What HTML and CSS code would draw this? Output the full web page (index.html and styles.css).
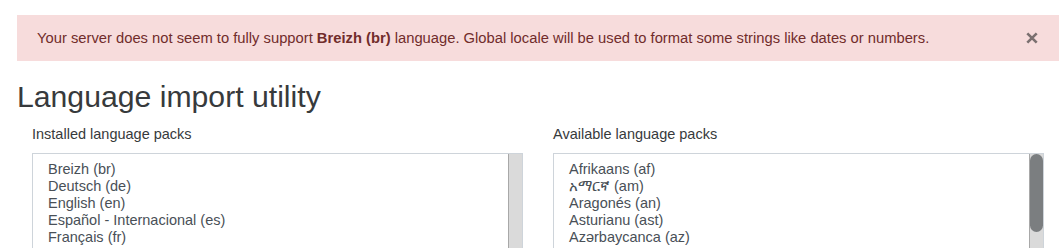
FILE: index.html
```html
<!DOCTYPE html>
<html lang="en">
<head>
    <meta charset="UTF-8">
    <title>Language import utility</title>
    <link rel="stylesheet" href="styles.css">
</head>
<body>
    <div class="page">
        <!-- Aviso del servidor -->
        <div class="alert">
            <span>Your server does not seem to fully support <strong>Breizh (br)</strong> language. Global locale will be used to format some strings like dates or numbers.</span>
            <span class="close">
                <svg width="12" height="12" viewBox="0 0 12 12"><path d="M1.3 1.3 L10.7 10.7 M10.7 1.3 L1.3 10.7" stroke="#7b7070" stroke-width="2.6" fill="none"/></svg>
            </span>
        </div>

        <h2 class="title">Language import utility</h2>

        <div class="columns">
            <div class="col">
                <div class="label">Installed language packs</div>
                <div class="listbox">
                    <div class="options">
                        <div>Breizh (br)</div>
                        <div>Deutsch (de)</div>
                        <div>English (en)</div>
                        <div>Español - Internacional (es)</div>
                        <div>Français (fr)</div>
                    </div>
                    <div class="scrollbar"></div>
                </div>
            </div>
            <div class="col">
                <div class="label">Available language packs</div>
                <div class="listbox">
                    <div class="options">
                        <div>Afrikaans (af)</div>
                        <div>አማርኛ (am)</div>
                        <div>Aragonés (an)</div>
                        <div>Asturianu (ast)</div>
                        <div>Azərbaycanca (az)</div>
                    </div>
                    <div class="scrollbar">
                        <div class="thumb"></div>
                    </div>
                </div>
            </div>
        </div>
    </div>
</body>
</html>
```

FILE: styles.css
```css
body{
    margin: 0;
    font-family: "Liberation Sans", Arial, "Noto Sans", sans-serif;
    background: #fff;
    color: #373a3c;
}

.page{
    padding: 15px 3px 0 17px;
}

.alert{
    display: flex;
    justify-content: space-between;
    align-items: center;
    background: #f7dcdc;
    color: #712c2b;
    padding: 12px 20px;
    font-size: 14.75px;
    line-height: 22px;
}

.close{
    display: flex;
    margin-right: 1px;
}

.title{
    margin: 18px 0 8px;
    font-size: 30.2px;
    font-weight: 400;
    line-height: 36px;
    color: #373a3c;
}

.columns{
    display: grid;
    grid-template-columns: 1fr 1fr;
}

.col{
    padding: 0 15px;
}

.label{
    font-size: 14.5px;
    line-height: 22px;
    margin-bottom: 8px;
}

.listbox{
    display: flex;
    height: 120px;
    border: 1px solid #ced4da;
    overflow: hidden;
}

.options{
    flex: 1;
    padding: 7px 15px;
    font-size: 14.5px;
    line-height: 17px;
    color: #495057;
}

.scrollbar{
    width: 13px;
    background: #dadada;
    border-left: 1px solid #a8a8a8;
}

.thumb{
    height: 78px;
    background: #7b7e80;
    border-radius: 7px;
}
```
